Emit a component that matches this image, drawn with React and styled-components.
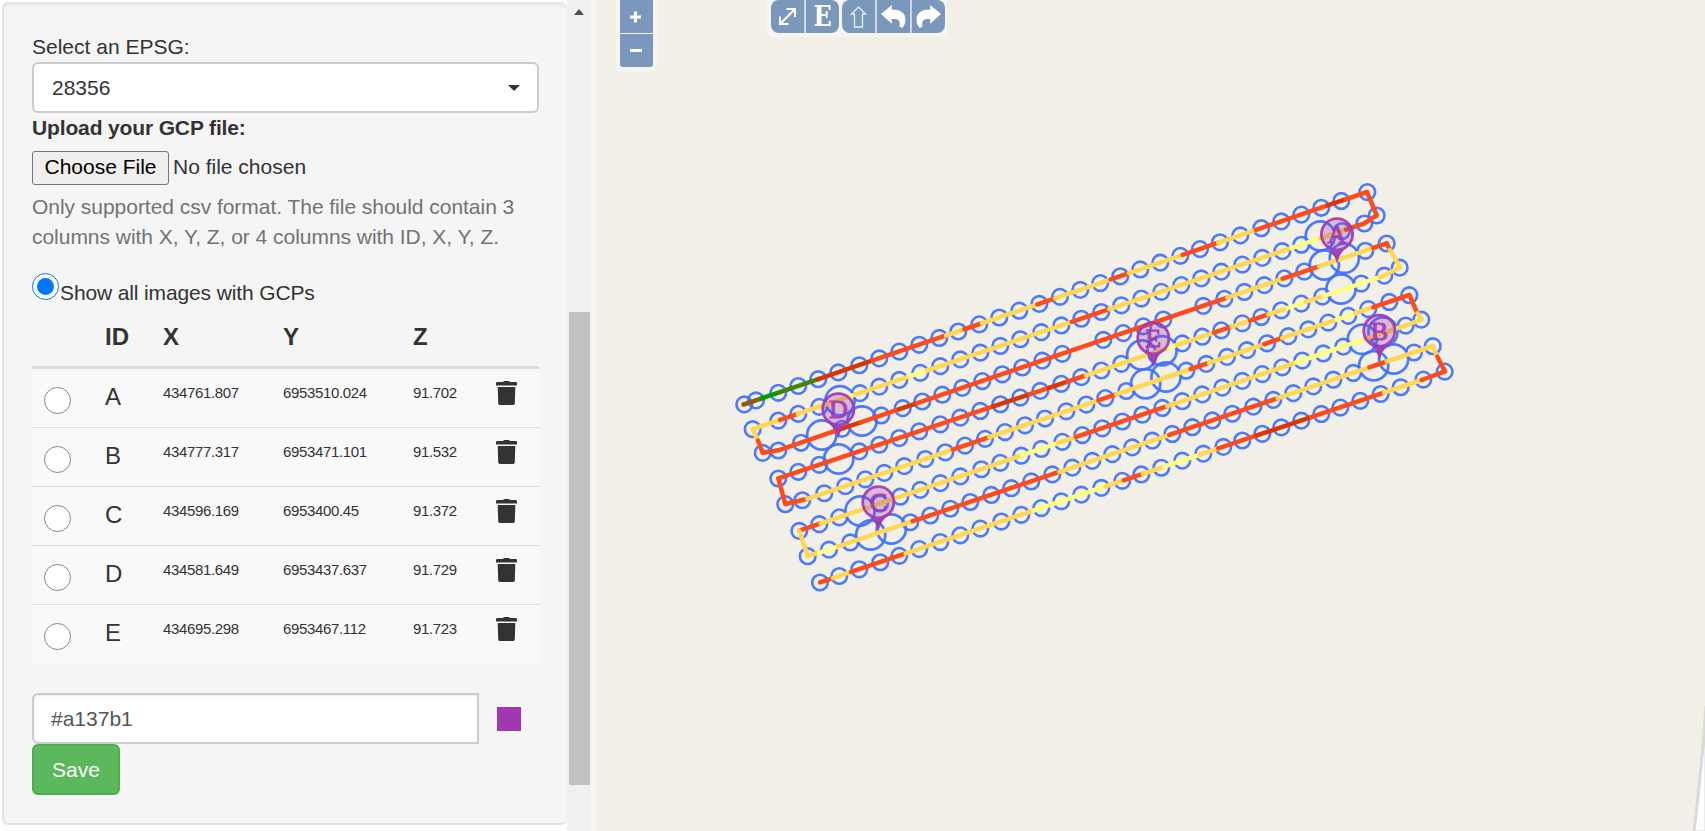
import React from "react";
import styled, { createGlobalStyle } from "styled-components";

const GlobalStyle = createGlobalStyle`
  * { box-sizing: border-box; }
  body { margin: 0; background: #fff; overflow: hidden; color: #333;
    font-family: "Liberation Sans", Arial, sans-serif; font-size: 21px; line-height: 30px; }
`;

const Page = styled.div`display: flex; width: 1705px; height: 831px;`;
const Sidebar = styled.aside`
  display: flex; width: 596px; height: 831px; background: #f6f5f1; flex: none;
`;
const PanelArea = styled.div`width: 567px; padding: 2px 0 6px 2px; background: #fff; flex: none;`;
const Panel = styled.div`
  height: 823px; border: 2px solid #e3e3e3; border-right: 0; border-radius: 6px; background: #f5f5f5;
  padding: 28px 28px 0 28px; box-shadow: inset 0 2px 2px rgba(0, 0, 0, 0.05);
`;
const Scrollbar = styled.div`
  display: flex; flex-direction: column; align-items: center; width: 24px; background: #f0f0f0; padding-top: 9px;
`;
const ScrollArrow = styled.div`
  width: 0; height: 0; border: 5.5px solid transparent; border-top: 0; border-bottom: 6px solid #505050;
`;
const ScrollThumb = styled.div`width: 21px; height: 473px; margin-top: 297px; background: #c1c1c1;`;

const Label = styled.div`
  height: ${(p) => p.$h}px; line-height: 30px; white-space: nowrap;
  font-weight: ${(p) => (p.$bold ? 700 : 400)}; letter-spacing: ${(p) => p.$ls || 0}px;
`;
const Select = styled.div`
  display: flex; align-items: center; justify-content: space-between; width: 507px; height: 51px;
  padding: 0 18px; border: 2px solid #ccc; border-radius: 6px; background: #fff;
`;
const Caret = styled.div`
  width: 0; height: 0; border: 6px solid transparent; border-top-color: #333; border-bottom: 0; margin-right: -1px;
`;
const FileRow = styled.div`display: flex; align-items: center; gap: 4px; height: 34px;`;
const FileButton = styled.button`
  width: 137px; height: 34px; padding: 0 0 2px; border: 1px solid #767676; border-radius: 3px; background: #efefef;
  color: #000; font: inherit; line-height: 30px; white-space: nowrap;
`;
const FileName = styled.span`padding-bottom: 2px;`;
const Help = styled.p`margin: 7px 0 24px; color: #737373; line-height: 30px; white-space: nowrap; letter-spacing: -0.035px;`;
const HelpLine = styled.span`display: block;`;
const RadioRow = styled.div`display: flex; align-items: flex-start; height: 37px; margin-top: -3px;`;
const Radio = styled.span`
  display: flex; align-items: center; justify-content: center; flex: none;
  width: 27px; height: 27px; border-radius: 50%; background: #fff;
  border: 1px solid ${(p) => (p.$on ? "#0075ff" : "#868686")};
  &::after { content: ""; width: 17px; height: 17px; border-radius: 50%; background: ${(p) => (p.$on ? "#0075ff" : "transparent")}; }
`;
const RadioText = styled.span`padding-top: 5px; margin-left: 1px; letter-spacing: -0.13px;`;

const Grid = styled.div`
  display: grid; width: 507px; grid-template-columns: 73px 58px 120px 130px 83px 43px;
`;
const Head = styled(Grid)`
  height: 59px; border-bottom: 3px solid #ddd; font-size: 24px; font-weight: 700; line-height: 54px;
`;
const Row = styled(Grid)`
  height: ${(p) => (p.$first ? 58 : 59)}px; background: #f9f9f9; border-top: ${(p) => (p.$first ? 0 : 1)}px solid #ddd;
`;
const RadioCell = styled.div`padding: 18px 0 0 12px;`;
const IdCell = styled.div`font-size: 24px; line-height: 56px;`;
const NumCell = styled.div`font-size: 15px; line-height: 47px; letter-spacing: -0.35px;`;
const IconCell = styled.div`padding-top: 12px; line-height: 0;`;

const ColorRow = styled.div`display: flex; align-items: center; margin-top: 30px; gap: 18px;`;
const ColorInput = styled.div`
  display: flex; align-items: center; width: 447px; height: 51px; padding-left: 17px; background: #fff; color: #555;
  border: 2px solid #ccc; border-radius: 6px 0 0 6px; box-shadow: inset 0 1px 2px rgba(0, 0, 0, 0.08);
`;
const Swatch = styled.div`width: 24px; height: 24px; background: #a137b1;`;
const Save = styled.button`
  display: block; width: 88px; height: 51px; padding: 0; border: 2px solid #4cae4c; border-radius: 6px;
  background: #5cb85c; color: #fff; font: inherit;
`;

const MapArea = styled.main`position: relative; width: 1109px; height: 831px; background: #f2efe9; overflow: hidden;`;
const MapDrawing = styled.svg`display: block;`;
const ZoomBox = styled.div`
  position: absolute; left: 20px; top: 0; width: 41px; height: 72px; padding: 0 4px 5px; border-radius: 0 0 5px 5px;
  background: rgba(255, 255, 255, 0.4); display: flex; flex-direction: column; gap: 1px;
`;
const Tool = styled.div`
  display: flex; align-items: center; justify-content: center; width: 33px; height: 33px; flex: none;
  background: #7b98bc; color: #fff; border-radius: ${(p) => p.$r || "0"};
`;
const ToolBox = styled.div`
  position: absolute; left: 171px; top: 0; width: 180px; height: 37px; padding: 0 4px; border-radius: 0 0 6px 6px;
  background: rgba(255, 255, 255, 0.4); display: flex; gap: 3px;
`;
const ToolGroup = styled.div`
  display: flex; gap: 2px; height: 33px; background: #ced8e3; border-radius: 8px;
  & > :first-child { border-radius: 8px 0 0 8px; }
  & > :last-child { border-radius: 0 8px 8px 0; }
`;
const ToolLetter = styled.span`
  font-family: "DejaVu Serif", serif; font-weight: 700; font-size: 28px; line-height: 33px; transform: scaleX(0.85);
`;

const YEL = "#ffd752", RED = "#ff4a1c", DRK = "#db3503", LGT = "#ffff80";

/* Each flight strip: way points of the line, colour runs [until x, colour], camera positions. */
const strips = [
  { pts: [[743.5, 404.5], [1367, 192]],
    runs: [[761.7, "#8f5c05"], [780, "#00a005"], [818.3, "#4a8005"], [872.7, DRK], [946, RED], [964.3, YEL], [982, RED], [1037.3, YEL], [1055, RED], [1110.7, YEL], [1129, RED], [1182.7, YEL], [1218.3, RED], [1256, YEL], [1328.3, RED], [1346, DRK], [1367, RED]],
    xs: [744.3, 756, 778.3, 798.3, 818.3, 838.3, 859.3, 879.3, 899.3, 919.3, 939.3, 958.3, 979.3, 999.3, 1019.3, 1039.3, 1060, 1080.3, 1100.3, 1120.3, 1140.3, 1160.3, 1180.3, 1200, 1220, 1240.3, 1261.3, 1281.3, 1301.3, 1321.3, 1341.3, 1367.3] },
  { pts: [[752.7, 429], [1364, 223.5], [1376.7, 215.3]],
    runs: [[780, YEL], [797.7, RED], [850.7, YEL], [855, LGT], [909.3, YEL], [927.3, LGT], [1071.7, YEL], [1109.3, RED], [1291.7, YEL], [1320, LGT], [1346, YEL], [1376.7, RED]],
    xs: [752.7, 778.3, 798.3, 819.3, 860, 879.3, 899.3, 920.3, 940.3, 960.3, 980.3, 1000.3, 1020.3, 1041.3, 1061.3, 1081.3, 1101.3, 1121.3, 1141.3, 1161.3, 1181.3, 1201.3, 1221.3, 1242.3, 1262.3, 1282.3, 1301.3, 1342, 1364.3, 1376.7] },
  { pts: [[762.7, 452.7], [778.3, 450.3], [1386.7, 243.3]],
    runs: [[843.3, RED], [860.7, DRK], [899.3, RED], [917.3, DRK], [1227.3, RED], [1282.7, YEL], [1319, RED], [1373.3, YEL], [1386.7, RED]],
    xs: [762.7, 778.3, 801, 842, 881.3, 902.7, 922.3, 942.3, 962.3, 982.3, 1002.3, 1022.3, 1042.3, 1062.3, 1103.3, 1123.3, 1143.3, 1163.3, 1203.3, 1224.3, 1244.3, 1264.3, 1284.3, 1304.3, 1365.3, 1386.7] },
  { pts: [[778.3, 478.3], [1383.3, 276], [1400, 267.3]],
    runs: [[993.3, RED], [1030, DRK], [1049, RED], [1067.3, DRK], [1086, RED], [1168.3, YEL], [1177.3, LGT], [1214, YEL], [1231.7, RED], [1250, YEL], [1268.3, RED], [1287.3, YEL], [1305.7, LGT], [1323.3, YEL], [1380, LGT], [1400, YEL]],
    xs: [778.3, 798.3, 819.3, 859.3, 879.3, 899.3, 919.3, 940.3, 960.3, 980.3, 1000.3, 1020.3, 1040.3, 1061.3, 1081.3, 1101.3, 1121.3, 1182.3, 1202.3, 1221.3, 1242.3, 1261.3, 1281.3, 1301.3, 1322.3, 1361.3, 1384.3, 1399.7] },
  { pts: [[785.3, 504], [806.7, 499], [1409.3, 295]],
    runs: [[807.3, RED], [952.7, YEL], [989.3, RED], [1098.3, YEL], [1116, RED], [1190.7, YEL], [1209, RED], [1264.3, YEL], [1282.3, RED], [1336.7, YEL], [1355, LGT], [1373.3, YEL], [1409.3, RED]],
    xs: [785.3, 802.3, 824.3, 845.3, 865.3, 884.3, 904.3, 925.3, 945.3, 965, 985, 1005, 1025, 1045, 1066.3, 1086.3, 1105.3, 1126.3, 1186.3, 1206.3, 1227, 1247, 1267, 1288.3, 1308.3, 1328.3, 1348.3, 1368.3, 1389.3, 1409.3] },
  { pts: [[799.3, 530.7], [1406.7, 325], [1421.7, 319.3]],
    runs: [[820.7, RED], [1021.7, YEL], [1058.3, LGT], [1076, YEL], [1167.3, RED], [1296.7, YEL], [1365, LGT], [1421.7, YEL]],
    xs: [799.3, 819.3, 839.3, 880, 900.3, 920.3, 940.3, 960.3, 981.3, 1000.3, 1021.3, 1041.3, 1062.3, 1082.3, 1102.3, 1122.3, 1142.3, 1162.3, 1182.3, 1202.3, 1222.3, 1242.3, 1262.3, 1282.3, 1302.3, 1323.3, 1343.3, 1405.7, 1421.3] },
  { pts: [[807.7, 556], [819.3, 552.7], [1432.7, 346]],
    runs: [[819.3, YEL], [838.3, LGT], [912.7, YEL], [1059.3, RED], [1169.3, YEL], [1277.7, RED], [1369.3, YEL], [1386.7, RED], [1432.7, YEL]],
    xs: [807.7, 829, 850.3, 910.3, 930.3, 950.3, 970.3, 991.3, 1011.3, 1031.3, 1052.3, 1072.3, 1092.3, 1112.3, 1132.3, 1152.3, 1172.3, 1192.3, 1212.3, 1232.3, 1253.3, 1273.3, 1293.3, 1313.3, 1333.3, 1353.3, 1414, 1432.7] },
  { pts: [[820, 582.3], [1421.7, 380], [1445, 371.3]],
    runs: [[832.7, RED], [851, YEL], [905.7, RED], [1034, YEL], [1105.7, LGT], [1124, YEL], [1142.7, RED], [1164, YEL], [1200, LGT], [1218.3, YEL], [1256.7, RED], [1311, DRK], [1384, RED], [1421.7, YEL], [1445, RED]],
    xs: [820, 839.3, 859.3, 880.3, 899.3, 919.3, 940.3, 960.3, 980.3, 1001.3, 1021.3, 1041.3, 1061.3, 1081.3, 1101.3, 1122.3, 1141.3, 1161.3, 1182.3, 1203.3, 1223.3, 1242.3, 1262.3, 1281.3, 1301.3, 1321.3, 1340.3, 1360.3, 1380.7, 1400.7, 1423.3, 1444.7] },
];

const turns = [
  [RED, "1367,192 1376.7,215.3"], [YEL, "752.7,429 758,440.7"], [RED, "758,440.7 762.7,452.7"],
  [RED, "1386.7,243.3 1390,250"], [YEL, "1390,250 1400,267.3"], [RED, "778.3,478.3 785.3,504"],
  [RED, "1409.3,295 1417.5,313.3"], [YEL, "1417.5,313.3 1421.7,319.3"], [YEL, "799.3,530.7 807.7,556"],
  [YEL, "1432.7,346 1437.3,356.7"], [RED, "1437.3,356.7 1445,371.3"],
];

const largeCircles = [
  [840, 400.7], [821.7, 435], [862, 421], [838.7, 459], [860, 511], [870.7, 535], [891.3, 529],
  [1141.7, 355], [1162, 350.7], [1145.7, 383.7], [1166, 377], [1320.3, 236], [1324.3, 265], [1344.3, 258.3],
  [1341, 289], [1362.3, 339.3], [1383, 332], [1373.7, 365.7], [1393.7, 359],
];

const pins = [["A", 1337, 234.3], ["B", 1379.3, 330.7], ["C", 878.3, 502.3], ["D", 838.3, 409.3], ["E", 1153.3, 338.3]];

const yAt = (pts, x) => {
  let i = 0;
  while (i < pts.length - 2 && x > pts[i + 1][0]) i++;
  const [[x1, y1], [x2, y2]] = [pts[i], pts[i + 1]];
  return y1 + ((x - x1) * (y2 - y1)) / (x2 - x1);
};

const runPoints = (pts, from, to) =>
  [[from, yAt(pts, from)], ...pts.filter((p) => p[0] > from && p[0] < to), [to, yAt(pts, to)]]
    .map((p) => p.join(",")).join(" ");

function FlightMap() {
  return (
    <MapDrawing width="1109" height="831" viewBox="596 0 1109 831">
      <path d="M1706 706 Q1702 765 1694 832 H1706Z" fill="#fff" stroke="#dadada" strokeWidth="3" />
      <g fill="none" stroke="#3d70ff" strokeWidth="2.6" strokeOpacity="0.92">
        {strips.map((s) => s.xs.map((x) => <circle key={x} cx={x} cy={yAt(s.pts, x) + 0.2} r="7.8" />))}
        <g strokeWidth="2.7">{largeCircles.map(([x, y]) => <circle key={x} cx={x} cy={y} r="14.6" />)}</g>
      </g>
      <g fill="none" strokeWidth="4.5" strokeLinecap="round" strokeLinejoin="round">
        {strips.map((s) => s.runs.map(([to, color], i) => (
          <polyline key={to} stroke={color} points={runPoints(s.pts, i ? s.runs[i - 1][0] : s.pts[0][0], to)} />
        )))}
        {turns.map(([color, points]) => <polyline key={points} stroke={color} points={points} />)}
      </g>
      {pins.map(([id, x, y]) => (
        <g key={id} transform={`translate(${x} ${y})`} opacity="0.92">
          <circle r="15.6" fill="#a137b1" fillOpacity="0.32" stroke="#a137b1" strokeWidth="2.8" />
          <path d="M-9 13.5 Q-2.5 18 0 28 Q2.5 18 9 13.5 Q0 17 -9 13.5Z" fill="#a137b1" stroke="#a137b1" strokeWidth="1" />
          <text y="8.8" textAnchor="middle" fill="#a137b1" stroke="#a137b1" strokeWidth="1.1" fontFamily="Liberation Serif, serif" fontSize="26">{id}</text>
        </g>
      ))}
    </MapDrawing>
  );
}

const Trash = () => (
  <svg width="21" height="24" viewBox="0 0 21 24" fill="#333">
    <path d="M0 2.3Q0 1 1.3 1H7L8 0H13L14 1H19.7Q21 1 21 2.3V4.500H0Z" />
    <path d="M1.7 6H19.3L18.8 22.3Q18.7 24 17.2 24H3.8Q2.3 24 2.2 22.3Z" />
  </svg>
);

const ArrowSvg = styled.svg`transform: ${(p) => (p.$flip ? "scaleX(-1)" : "none")};`;
const UndoArrow = ({ flip }) => (
  <ArrowSvg $flip={flip} width="25" height="23" viewBox="0 0 25 23">
    <path d="M0 9 L10.8 0 V4.700 H14 C21 5 24.500 9.500 24.500 14.500 C24.500 18 23.300 20.500 21.500 22.700 L18.500 21.800 C19.500 17 18.500 14.500 14 14 H10.800 V18.700Z" fill="#fff" />
  </ArrowSvg>
);

const gcps = [
  ["A", "434761.807", "6953510.024", "91.702"],
  ["B", "434777.317", "6953471.101", "91.532"],
  ["C", "434596.169", "6953400.45", "91.372"],
  ["D", "434581.649", "6953437.637", "91.729"],
  ["E", "434695.298", "6953467.112", "91.723"],
];

export default function App() {
  return (
    <Page>
      <GlobalStyle />
      <Sidebar>
        <PanelArea>
          <Panel>
            <Label $h={30}>Select an EPSG:</Label>
            <Select><span>28356</span><Caret /></Select>
            <Label $h={38} $bold $ls={-0.14}>Upload your GCP file:</Label>
            <FileRow><FileButton>Choose File</FileButton><FileName>No file chosen</FileName></FileRow>
            <Help>
              <HelpLine>Only supported csv format. The file should contain 3</HelpLine>
              <HelpLine>columns with X, Y, Z, or 4 columns with ID, X, Y, Z.</HelpLine>
            </Help>
            <RadioRow><Radio $on /><RadioText>Show all images with GCPs</RadioText></RadioRow>
            <Head><span /><span>ID</span><span>X</span><span>Y</span><span>Z</span><span /></Head>
            {gcps.map(([id, x, y, z], i) => (
              <Row key={id} $first={i === 0}>
                <RadioCell><Radio /></RadioCell>
                <IdCell>{id}</IdCell>
                <NumCell>{x}</NumCell>
                <NumCell>{y}</NumCell>
                <NumCell>{z}</NumCell>
                <IconCell><Trash /></IconCell>
              </Row>
            ))}
            <ColorRow><ColorInput>#a137b1</ColorInput><Swatch /></ColorRow>
            <Save>Save</Save>
          </Panel>
        </PanelArea>
        <Scrollbar><ScrollArrow /><ScrollThumb /></Scrollbar>
      </Sidebar>
      <MapArea>
        <FlightMap />
        <ZoomBox>
          <Tool><svg width="15" height="12"><path d="M5 0.500h3v4h4v3H8V11.500H5V7.500H1v-3h4z" fill="#fff" /></svg></Tool>
          <Tool $r="0 0 3px 3px"><svg width="14" height="4"><path d="M0 0h12v3H0z" fill="#fff" /></svg></Tool>
        </ZoomBox>
        <ToolBox>
          <ToolGroup>
            <Tool>
              <svg width="17" height="17" viewBox="0 0 17 17" fill="none" stroke="#fff" strokeWidth="2">
                <path d="M2 15 15 2M7.500 1H16V9M1 8.500V16H9.500" />
              </svg>
            </Tool>
            <Tool><ToolLetter>E</ToolLetter></Tool>
          </ToolGroup>
          <ToolGroup>
            <Tool>
              <svg width="17" height="22" viewBox="0 0 17 22" fill="none" stroke="#e3eaf2" strokeWidth="1.300">
                <path d="M8.500 1 15.500 8H12.500V21H4.500V8H1.500Z" />
              </svg>
            </Tool>
            <Tool><UndoArrow /></Tool>
            <Tool><UndoArrow flip /></Tool>
          </ToolGroup>
        </ToolBox>
      </MapArea>
    </Page>
  );
}
